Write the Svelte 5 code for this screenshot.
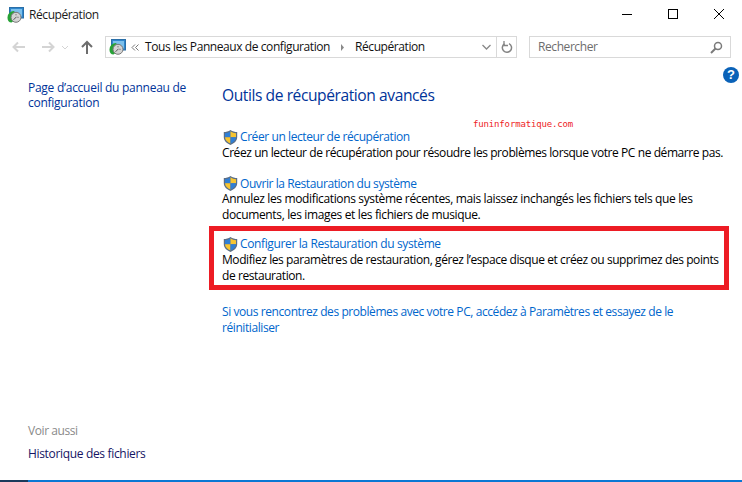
<script>
  const tasks = [
    { title: 'Créer un lecteur de récupération', desc: 'Créez un lecteur de récupération pour résoudre les problèmes lorsque votre PC ne démarre pas.', cls: 't1' },
    { title: 'Ouvrir la Restauration du système', desc: 'Annulez les modifications système récentes, mais laissez inchangés les fichiers tels que les documents, les images et les fichiers de musique.', cls: 't2' },
    { title: 'Configurer la Restauration du système', desc: 'Modifiez les paramètres de restauration, gérez l’espace disque et créez ou supprimez des points de restauration.', cls: 't3' }
  ];
</script>

{#snippet recovery()}
  <svg class="rec" width="17" height="16" viewBox="0 0 17 16">
    <rect x="2.500" y="0.500" width="14" height="10.500" fill="#2f86cc" stroke="#2a6fa8" />
    <rect x="4" y="2" width="11" height="7.500" fill="#7cc0ec" />
    <path d="M.5 11a6.500 6.500 0 0 1 6.500-7l1.500 2-2.500 2 .5 6-2 1.500C2 15.500.5 13.500.5 11Z" fill="#26a236" />
    <circle cx="9" cy="10.300" r="5" fill="#d4d4d4" stroke="#777" />
    <path d="M6.500 12.800 9.500 9.800M9 7.300v1M11.500 10.300h-1" stroke="#555" fill="none" />
  </svg>
{/snippet}

{#snippet shield()}
  <svg class="shield" width="15" height="17" viewBox="0 0 15 16">
    <path d="M7.500.5C5.500 2 3 2.600.8 2.600v5.200c0 3.600 3 6.200 6.700 7.700 3.700-1.500 6.700-4.100 6.700-7.700V2.600C12 2.600 9.500 2 7.500.5Z" fill="#5b6e86" />
    <path d="M7.500 1.800V7.800H2V3.800c2 0 4-.7 5.500-2Z" fill="#2f7fd6" />
    <path d="M7.500 1.800c1.500 1.300 3.500 2 5.500 2v4H7.500Z" fill="#f7c531" />
    <path d="M2 7.800h5.500v6.300C4.500 12.800 2 10.700 2 7.800Z" fill="#f7c531" />
    <path d="M7.500 7.800H13c0 2.900-2.500 5-5.500 6.300Z" fill="#2f7fd6" />
  </svg>
{/snippet}

<div class="window">
  <header class="titlebar">
    <div class="title">{@render recovery()}<span>Récupération</span></div>
    <div class="controls">
      <svg width="46" height="30" viewBox="0 0 46 30"><path d="M18 14.500h10" stroke="#000" /></svg>
      <svg width="46" height="30" viewBox="0 0 46 30"><rect x="18.500" y="9.500" width="9" height="9" fill="none" stroke="#000" /></svg>
      <svg width="46" height="30" viewBox="0 0 46 30"><path d="M18 9l10 10M28 9 18 19" stroke="#000" fill="none" /></svg>
    </div>
  </header>

  <nav class="navbar">
    <div class="arrows">
      <svg width="16" height="16" viewBox="0 0 16 16"><path d="M14 8H3M7 3.500 2.500 8 7 12.500" stroke="#d4d4d4" stroke-width="2" fill="none" /></svg>
      <svg width="16" height="16" viewBox="0 0 16 16"><path d="M2 8h11M9 3.500 13.500 8 9 12.500" stroke="#d4d4d4" stroke-width="2" fill="none" /></svg>
      <svg width="8" height="16" viewBox="0 0 8 16"><path d="M1 7l3 3 3-3" stroke="#d4d4d4" fill="none" /></svg>
      <svg width="16" height="16" viewBox="0 0 16 16"><path d="M8 15V3M3 8l5-5 5 5" stroke="#6d6d6d" stroke-width="2" fill="none" /></svg>
    </div>
    <div class="address">
      {@render recovery()}
      <svg class="chev" width="8" height="7" viewBox="0 0 8 7"><path d="M4 .500 1 3.500l3 3M7.500 .500l-3 3 3 3" stroke="#777" fill="none" /></svg>
      <span class="crumb">Tous les Panneaux de configuration</span>
      <svg class="sep" width="5" height="7" viewBox="0 0 5 7"><path d="M1 0l3 3.500L1 7Z" fill="#8a8a8a" /></svg>
      <span class="crumb">Récupération</span>
      <svg class="dd" width="9" height="6" viewBox="0 0 9 6"><path d="M.5 1l4 4 4-4" stroke="#888" stroke-width="1.300" fill="none" /></svg>
      <div class="refresh">
        <svg width="12" height="13" viewBox="0 0 12 13"><path d="M8 2.600A4.600 4.600 0 1 1 3.500 2.800" stroke="#848484" stroke-width="1.500" fill="none" /><path d="M3 0v4.500h4" stroke="#848484" stroke-width="1.300" fill="none" /></svg>
      </div>
    </div>
    <div class="search">
      <span>Rechercher</span>
      <svg width="13" height="13" viewBox="0 0 13 13"><circle cx="8" cy="5" r="3.500" fill="none" stroke="#7a7a7a" stroke-width="1.500" /><path d="M5.500 7.500 1 12" stroke="#7a7a7a" stroke-width="2" /></svg>
    </div>
  </nav>

  <div class="body">
    <aside class="side">
      <a class="home">Page d’accueil du panneau de configuration</a>
      <div class="also">
        <div class="also-label">Voir aussi</div>
        <a class="history">Historique des fichiers</a>
      </div>
    </aside>
    <main class="main">
      <div class="help">?</div>
      <h1>Outils de récupération avancés</h1>
      {#each tasks as t}
        <section class="task {t.cls}">
          <div class="task-title">{@render shield()}<a>{t.title}</a></div>
          <p>{t.desc}</p>
        </section>
      {/each}
      <a class="reset">Si vous rencontrez des problèmes avec votre PC, accédez à Paramètres et essayez de le réinitialiser</a>
      <div class="watermark">funinformatique.com</div>
      <div class="redbox"></div>
    </main>
  </div>
  <footer class="bottom"><div class="dark"></div></footer>
</div>

<style>
  :global(body) { margin: 0; background: #fff; }
  .window {
    width: 742px; height: 482px; display: flex; flex-direction: column; overflow: hidden;
    font-family: "Open Sans", "Noto Sans", sans-serif; font-size: 12px; letter-spacing: -0.42px;
    color: #000; background: #fff; line-height: 16px;
  }
  .titlebar { height: 30px; display: flex; justify-content: space-between; flex: none; }
  .title { display: flex; align-items: center; gap: 5px; padding-left: 7px; color: #1a1a1a; }
  .controls { display: flex; }
  .navbar { height: 22px; margin-top: 6px; display: flex; flex: none; padding-left: 11px; }
  .arrows { display: flex; align-items: center; gap: 13px; width: 94px; }
  .arrows svg:nth-child(3) { margin-left: -8px; margin-right: -3px; }
  .address {
    width: 412px; box-sizing: border-box; border: 1px solid #d9d9d9; display: flex; align-items: center;
    padding-left: 3px; color: #111;
  }
  .chev { margin: 0 6px 0 5px; }
  .sep { margin: 0 10px; }
  .dd { margin-left: auto; margin-right: 5px; }
  .refresh { width: 19px; height: 100%; border-left: 1px solid #d9d9d9; display: flex; align-items: center; justify-content: center; }
  .search {
    margin-left: 12px; width: 202px; box-sizing: border-box; border: 1px solid #d9d9d9; display: flex; align-items: center;
    justify-content: space-between; padding: 0 7px 0 8px; color: #6d6d6d;
  }
  .body { flex: 1; display: flex; min-height: 0; }
  .side { width: 222px; flex: none; box-sizing: border-box; padding: 22px 20px 0 28px; display: flex; flex-direction: column; justify-content: space-between; }
  .home { color: #003399; letter-spacing: -0.27px; line-height: 15px; }
  .also { padding-bottom: 18px; }
  .also-label { color: #8a8a8a; margin-bottom: 7px; }
  .history { color: #151564; letter-spacing: -0.33px; }
  .main { position: relative; flex: 1; padding: 27px 16px 0 0; }
  .help {
    position: absolute; top: 9px; right: 3px; width: 16px; height: 16px; border-radius: 50%; background: #0a62b8; color: #fff;
    font: bold 13px/16px "Liberation Sans", sans-serif; text-align: center; letter-spacing: 0;
  }
  h1 { margin: 0 0 23px; font-size: 15.600px; font-weight: 400; color: #003399; line-height: 21px; letter-spacing: -0.43px; }
  .task { margin-bottom: 15px; }
  .task-title { display: flex; align-items: center; gap: 3px; height: 16px; }
  .shield { flex: none; margin-left: 1px; margin-right: -1px; }
  .task-title a { color: #0066cc; }
  p { margin: 0; line-height: 16px; }
  .t2 .task-title { height: 15px; line-height: 15px; }
  .t2 p { letter-spacing: -0.36px; }
  .t2 { margin-bottom: 13px; }
  .t3 { margin-bottom: 20px; }
  .t3 .task-title a { letter-spacing: -0.37px; }
  .reset { display: block; color: #0066cc; padding-right: 40px; }
  .watermark {
    position: absolute; left: 251px; top: 60px; color: #ee1c25; font: 9px/12px "DejaVu Sans Mono", monospace; letter-spacing: -0.15px;
  }
  .redbox { position: absolute; left: -13px; top: 168px; width: 520px; height: 64px; border: 5px solid #ed1c24; box-sizing: border-box; }
  .bottom { height: 2px; background: #0a78d4; flex: none; }
  .dark { width: 28px; height: 2px; background: #1a3a5c; }
</style>
